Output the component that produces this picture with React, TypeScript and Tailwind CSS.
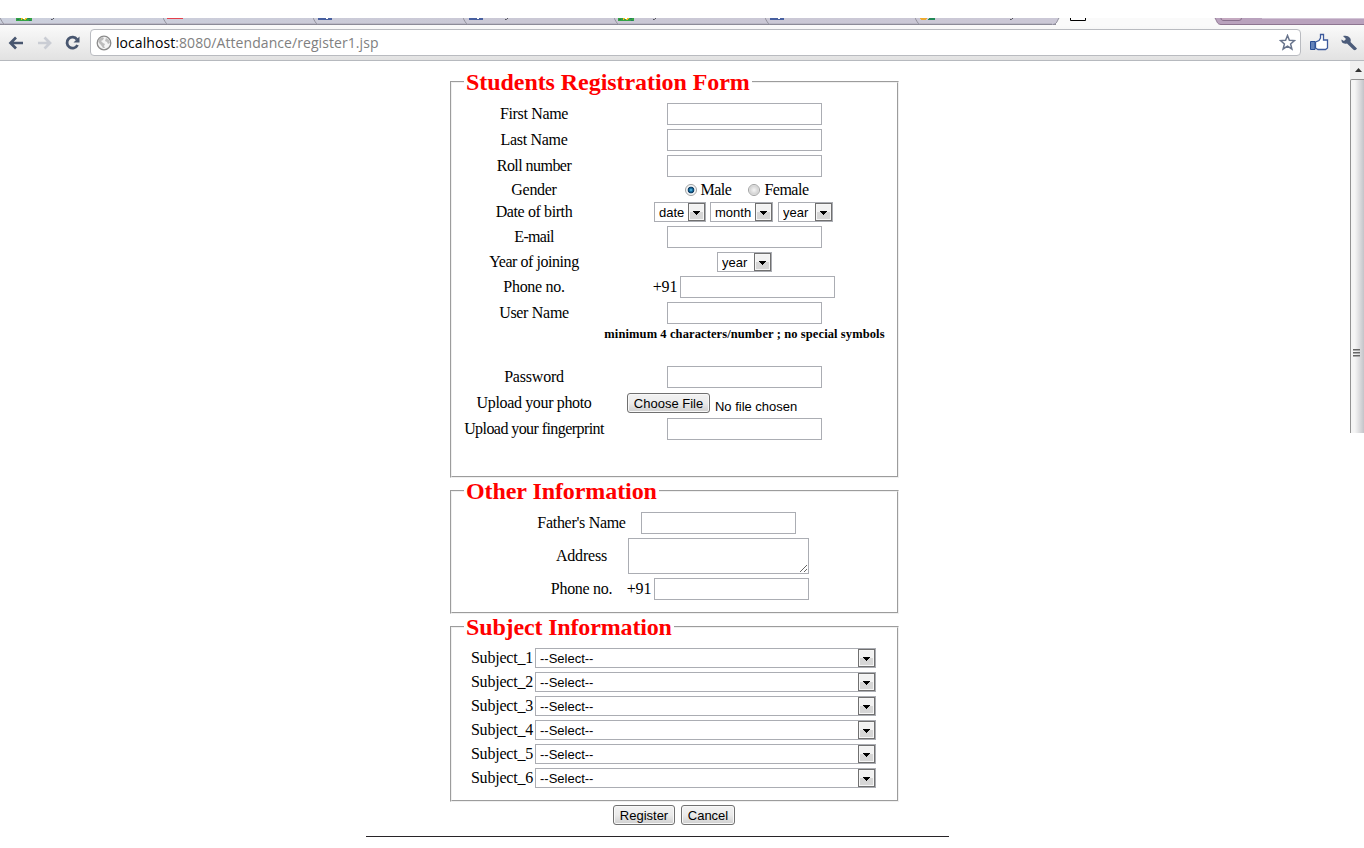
import React from "react";

const serif = "font-['Liberation_Serif',serif]";
const sans = "font-['Liberation_Sans',sans-serif]";

function TextInput({ type = "text" }: { type?: string }) {
  return <input type={type} className="block h-[22px] w-[155px] shrink-0 border border-[#abadb3] bg-white px-1 text-[13px] outline-none" />;
}

function Select({ label, width }: { label: string; width: string }) {
  return (
    <span className={`relative block h-5 shrink-0 ${width}`}>
      <select className={`block h-5 w-full appearance-none border border-[#abadb3] bg-white pt-px pl-1 text-[13px] leading-[17px] tracking-normal text-black outline-none ${sans}`}>
        <option>{label}</option>
      </select>
      <span className="pointer-events-none absolute top-px right-px flex h-[18px] w-[17px] items-center justify-center border border-[#707070] bg-linear-to-b from-[#f2f2f2] from-50% to-[#d6d6d6] to-50% shadow-[inset_0_0_0_1px_#f6f6f6]">
        <svg width="7" height="4" viewBox="0 0 7 4" shapeRendering="crispEdges" className="mt-px">
          <path d="M0 0H7V1H6V2H5V3H4V4H3V3H2V2H1V1H0Z" fill="#000" />
        </svg>
      </span>
    </span>
  );
}

function Row({ label, height = "h-[26px]", labelWidth = "w-[140px]", fieldWidth = "w-[281px]", spacing = "tracking-[-0.3px]", children }: {
  label: string; height?: string; labelWidth?: string; fieldWidth?: string; spacing?: string; children?: React.ReactNode;
}) {
  return (
    <div className={`flex items-center ${height}`}>
      <label className={`shrink-0 text-center whitespace-nowrap ${labelWidth} ${spacing}`}>{label}</label>
      <div className={`flex shrink-0 items-center justify-center ${fieldWidth}`}>{children}</div>
    </div>
  );
}

function Section({ title, height, spacing, children }: { title: string; height: string; spacing: string; children: React.ReactNode }) {
  return (
    <fieldset className={`w-[449px] border-2 border-[#f0f0f0] pt-[6px] pl-3 [border-style:groove] ${height}`}>
      <legend className={`h-[26px] px-[2px] text-[24px] leading-[27px] font-bold whitespace-nowrap text-[#ff0000] ${spacing}`}>{title}</legend>
      {children}
    </fieldset>
  );
}

function Radio({ label, checked = false }: { label: string; checked?: boolean }) {
  return (
    <label className="flex items-center gap-1 tracking-[-0.5px]">
      <input type="radio" name="gender" defaultChecked={checked} className="size-3 appearance-none rounded-full border border-[#a0a1a1] bg-[radial-gradient(circle,#f5f5f5_0,#d4d4d4_60%,#fff_75%)] checked:bg-[radial-gradient(circle_at_50%_50%,#7fd4f5_0,#1778ae_20%,#10365a_42%,#e8edf0_52%,#fff_75%)]" />
      {label}
    </label>
  );
}

function Button({ children, width }: { children: string; width: string }) {
  return (
    <button type="button" className={`h-5 shrink-0 rounded-[3px] border border-[#707070] bg-linear-to-b from-[#f2f2f2] via-[#ebebeb] via-50% to-[#cfcfcf] pt-px text-[13px] leading-[17px] tracking-normal whitespace-nowrap text-black shadow-[inset_0_0_0_1px_#f8f8f8] ${sans} ${width}`}>
      {children}
    </button>
  );
}

type Icon = "maps" | "mail" | "facebook" | "google";

function Tab({ width, icon, iconOffset, tail }: { width: string; icon: Icon; iconOffset: string; tail?: string }) {
  return (
    <div className={`flex h-full shrink-0 items-start ${width}`}>
      <svg width="6" height="7" viewBox="0 0 6 7" className="-mr-1.5 shrink-0">
        <path d="M0 0C1.5 2.5 2.5 5 5 7" stroke="#92919c" fill="none" />
      </svg>
      <svg width="16" height="3" viewBox="0 0 16 3" shapeRendering="crispEdges" className={`shrink-0 ${iconOffset}`}>
        {icon === "maps" && (<><path d="M0 0H16V3H0Z" fill="#33a344" /><path d="M5 0H11V1H10V2H8V1H6V2H5Z" fill="#f4bc28" /><path d="M7 0H9V1H7Z" fill="#fff" /><path d="M1 1H3V2H1ZM12 0H14V1H12ZM13 2H15V3H13Z" fill="#237d58" /></>)}
        {icon === "mail" && <path d="M0 0H16V1H0Z" fill="#e5404c" />}
        {icon === "facebook" && (<><path d="M0 0H14V2H0Z" fill="#4860a0" /><path d="M8 0H10V1H8Z" fill="#fff" /></>)}
        {icon === "google" && (<><path d="M0 0H7V1H6V2H1V1H0Z" fill="#edaa31" /><path d="M9 0H15V2H8V1H9Z" fill="#218856" /></>)}
      </svg>
      {tail && (
        <svg width="3" height="2" viewBox="0 0 3 2" className={`shrink-0 ${tail}`}>
          <path d="M0 1.5H1.5L3 0" stroke="#54545c" fill="none" />
        </svg>
      )}
    </div>
  );
}

function Browser() {
  return (
    <header>
      <div className="mt-[18px] flex h-[7px] overflow-hidden bg-[#fafafa]">
        <div className="flex h-full w-[1056px] shrink-0 border-b border-[#8c8b98] bg-linear-to-r from-[#ccd0dd] via-[#cac8d5] to-[#cbc8d6] shadow-[inset_0_-1px_0_#bbb9c6]">
          <Tab width="w-[163px]" icon="maps" iconOffset="ml-4" tail="ml-[19px]" />
          <Tab width="w-[150px]" icon="mail" iconOffset="ml-1" />
          <Tab width="w-[150px]" icon="facebook" iconOffset="ml-[5px]" />
          <Tab width="w-[151px]" icon="facebook" iconOffset="ml-[6px]" tail="ml-5" />
          <Tab width="w-[151px]" icon="maps" iconOffset="ml-1" tail="ml-[19px]" />
          <Tab width="w-[150px]" icon="facebook" iconOffset="ml-[5px]" />
          <Tab width="w-[141px]" icon="google" iconOffset="ml-[5px]" tail="ml-[74px]" />
        </div>
        <svg width="160" height="7" viewBox="0 0 160 7" className="-ml-[4px] shrink-0">
          <path d="M7 0C5 3 5 6 1 6.5H0V0Z" fill="#cbc8d6" />
          <path d="M7 0C5 3 5 6 1 6.5" stroke="#8c8b98" fill="none" />
          <path d="M18.500 0V2.500H33.500V0" stroke="#000" fill="#fff" />
        </svg>
        <svg width="152" height="7" viewBox="0 0 152 7" className="shrink-0">
          <path d="M3 0C5 3 5 6.5 9 6.5H152V0Z" fill="#b9a2bd" />
          <path d="M3 0C5 3 5 6.5 9 6.5H152" stroke="#8d7590" fill="none" />
          <path d="M9 0C9 2 10 2.5 12 2.5H27Q29.500 2.500 29.500 0" stroke="#89708d" fill="#c4a9c0" />
          <path d="M50 0H152" stroke="#eee7f1" />
        </svg>
      </div>
      <div className="flex h-9 items-center border-b border-[#b6b9be] bg-linear-to-b from-[#fafafa] to-[#e2e2e2]">
        <svg width="90" height="34" viewBox="0 0 90 34" fill="none" className="shrink-0">
          <path d="M16 11.500L10.500 17L16 22.500M11 17H23" stroke="#48566f" strokeWidth="2.700" />
          <path d="M44.500 11.500L50 17L44.500 22.500M49.500 17H38" stroke="#cacdd4" strokeWidth="2.700" />
          <path d="M77 13.500A5.500 5.500 0 1 0 77.500 19" stroke="#48566f" strokeWidth="2.800" />
          <path d="M79.500 10.500V16.500H73.500Z" fill="#48566f" />
        </svg>
        <div className="flex h-[27px] w-[1211px] shrink-0 items-center rounded-[4px] border border-[#b9bbc0] bg-white pr-1 pl-[5px]">
          <svg width="16" height="16" viewBox="0 0 16 16" className="shrink-0">
            <circle cx="8" cy="8" r="6.800" fill="#f4f4f4" stroke="#8b8b8b" strokeWidth="1.300" />
            <path d="M3 4L6 2L8 3L7 5L5 6L7 8L9 9L8 11L9 13L7 13L5 10L3 8L2 6ZM10 3L13 5L14 8L12 9L11 7L9 6Z" fill="#bcbcbc" />
          </svg>
          <div className="ml-1 font-['Open_Sans',sans-serif] text-[14px] leading-5 tracking-[0.07px] whitespace-nowrap text-[#808080]"><span className="text-black">localhost</span>:8080/Attendance/register1.jsp</div>
          <svg width="17" height="17" viewBox="0 0 17 17" className="ml-auto shrink-0">
            <path d="M8.500 1.500L10.400 6.200L15.500 6.600L11.600 9.900L12.900 15L8.500 12.200L4.100 15L5.400 9.900L1.500 6.600L6.600 6.200Z" fill="#fff" stroke="#68748c" strokeWidth="1.500" />
          </svg>
        </div>
        <svg width="63" height="34" viewBox="0 0 63 34" className="shrink-0">
          <path d="M14.500 16L18 14.500L19.500 12V8.500H22.500V14H26.500V22L24.500 23.500H17L14.500 22Z" fill="#fff" stroke="#3d5a9c" strokeWidth="1.300" />
          <path d="M9.500 15.500H14V23.500H9.500Z" fill="#6583ba" stroke="#294d94" />
          <path transform="translate(1 0)" d="M41 10L44 13L42 15L39.500 13.500C39 16 41 18.500 45 17.500L51.500 23.800Q53.500 25 55 22.500L48.500 16C50 12 46 8.500 41 10Z" fill="#4c5c7a" />
        </svg>
      </div>
    </header>
  );
}

function Scrollbar() {
  return (
    <div className="flex h-[372px] w-[14px] shrink-0 flex-col overflow-hidden bg-[#f0f0f0]">
      <div className="flex h-[18px] shrink-0 items-center pl-[5px]">
        <svg width="7" height="4" viewBox="0 0 7 4"><path d="M0 4L3.500 0L7 4Z" fill="#333" /></svg>
      </div>
      <div className="flex w-[17px] flex-1 items-start rounded-t-[2px] border border-b-0 border-[#929292] bg-linear-to-r from-[#f5f5f5] from-25% via-[#dedee0] via-55% to-[#b9b9bf]">
        <svg width="8" height="8" viewBox="0 0 8 8" shapeRendering="crispEdges" className="mt-[269px] ml-[2px]">
          <path d="M0 0H7V1H0ZM0 3H7V4H0ZM0 6H7V7H0Z" fill="#666" />
          <path d="M0 1H7V2H0ZM0 4H7V5H0ZM0 7H7V8H0Z" fill="#aaa" />
        </svg>
      </div>
    </div>
  );
}

export default function App() {
  return (
    <div className="h-[848px] w-[1364px] overflow-hidden bg-white">
      <Browser />
      <div className="flex">
        <main className={`flex w-[1350px] shrink-0 flex-col items-center pt-2 text-[16px] leading-[18px] tracking-[-0.1px] text-black ${serif}`}>
          <form className="mr-[2px] flex w-[448px] flex-col">
            <Section title="Students Registration Form" height="h-[409px]" spacing="tracking-[-0.06px]">
              <Row label="First Name" spacing="tracking-[-0.35px]"><TextInput /></Row>
              <Row label="Last Name"><TextInput /></Row>
              <Row label="Roll number" spacing="tracking-[-0.55px]"><TextInput /></Row>
              <Row label="Gender" height="h-[21px]"><div className="ml-1 flex gap-[17px]"><Radio label="Male" checked /><Radio label="Female" /></div></Row>
              <Row label="Date of birth" height="h-6" spacing="tracking-[-0.4px]">
                <Select label="date" width="w-[52px]" />
                <span className="ml-1"><Select label="month" width="w-[63px]" /></span>
                <span className="mr-[2px] ml-[5px]"><Select label="year" width="w-[55px]" /></span>
              </Row>
              <Row label="E-mail" spacing="tracking-[-0.7px]"><TextInput /></Row>
              <Row label="Year of joining" height="h-6" spacing="tracking-[-0.45px]"><Select label="year" width="w-[55px]" /></Row>
              <Row label="Phone no."><span className="mr-[3px]">+91</span><span className="mr-px"><TextInput /></span></Row>
              <Row label="User Name"><TextInput /></Row>
              <Row label="" height="h-[38px]"><b className="-mt-[22px] text-[12.5px] tracking-[0.1px] whitespace-nowrap">minimum 4 characters/number ; no special symbols</b></Row>
              <Row label="Password" spacing="tracking-[-0.2px]"><TextInput type="password" /></Row>
              <Row label="Upload your photo" spacing="tracking-[-0.35px]">
                <div className="mr-auto ml-[23px] flex items-center">
                  <Button width="w-[83px]">Choose File</Button>
                  <span className={`mt-[7px] ml-[5px] text-[13px] tracking-[-0.02px] whitespace-nowrap ${sans}`}>No file chosen</span>
                </div>
              </Row>
              <Row label="Upload your fingerprint" spacing="tracking-[-0.57px]"><TextInput /></Row>
            </Section>
            <Section title="Other Information" height="h-[136px]" spacing="tracking-[-0.08px]">
              <div className="pl-[73px]">
                <Row label="Father's Name" labelWidth="w-[89px]" fieldWidth="w-[184px]"><TextInput /></Row>
                <Row label="Address" height="h-10" labelWidth="w-[89px]" fieldWidth="w-[184px]" spacing="tracking-[-0.2px]"><textarea className="block h-9 w-[181px] shrink-0 resize border border-[#abadb3] outline-none" /></Row>
                <Row label="Phone no." labelWidth="w-[89px]" fieldWidth="w-[184px]"><span className="mr-[3px]">+91</span><TextInput /></Row>
              </div>
            </Section>
            <Section title="Subject Information" height="h-[188px]" spacing="tracking-[-0.15px]">
              <div className="pl-[6px]">
                {[1, 2, 3, 4, 5, 6].map((n) => (
                  <Row key={n} label={`Subject_${n}`} height="h-6" labelWidth="w-[64px]" fieldWidth="w-[343px]" spacing="tracking-[-0.2px]"><Select label="--Select--" width="w-[341px]" /></Row>
                ))}
              </div>
            </Section>
            <div className="mt-[3px] flex justify-center gap-[6px]">
              <Button width="w-[62px]">Register</Button>
              <Button width="w-[54px]">Cancel</Button>
            </div>
          </form>
          <hr className="mt-[11px] mr-[35px] h-px w-[583px] border-0 bg-[#282428]" />
        </main>
        <Scrollbar />
      </div>
    </div>
  );
}
